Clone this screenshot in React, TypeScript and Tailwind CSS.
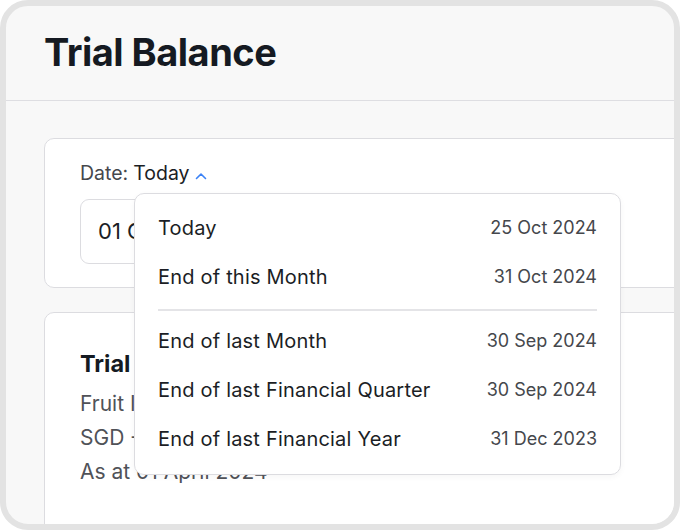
import React from "react";

const items = [
  { label: "Today", date: "25 Oct 2024" },
  { label: "End of this Month", date: "31 Oct 2024" },
];
const items2 = [
  { label: "End of last Month", date: "30 Sep 2024" },
  { label: "End of last Financial Quarter", date: "30 Sep 2024" },
  { label: "End of last Financial Year", date: "31 Dec 2023" },
];

function Row({ label, date }: { label: string; date: string }) {
  return (
    <div className="h-[49px] flex items-center justify-between">
      <span className="text-[20px] tracking-[0.2px] text-[#1b1e25]">{label}</span>
      <span className="text-[18px] text-[#45474c]">{date}</span>
    </div>
  );
}

export default function App() {
  return (
    <div className="w-[680px] h-[530px] bg-white" style={{ fontFamily: "Inter, 'Noto Sans', sans-serif" }}>
      <div className="w-full h-full rounded-[28px] border-[6px] border-[#e3e3e3] bg-[#f8f8f8] overflow-hidden flex flex-col">
        <header className="h-[95px] shrink-0 border-b border-[#dedee2] pl-[38px] flex items-center">
          <h1 className="text-[38px] font-bold text-[#151a22] tracking-[-0.5px] -mt-[2px]">Trial Balance</h1>
        </header>
        <div className="relative flex-1 pl-[38px] pt-[37px] flex flex-col gap-[24px]">
          <div className="w-[700px] h-[150px] shrink-0 rounded-[10px] border border-[#dcdce0] bg-white pl-[35px] pt-[23px]">
            <div className="flex items-center h-[24px] text-[19.5px]">
              <span className="text-[#45474c]">Date:</span>
              <span className="ml-[5px] text-[#1b1e25]">Today</span>
              <svg className="ml-[5px] mt-[3px]" width="12" height="8" viewBox="0 0 12 8" fill="none">
                <path d="M1.5 6.5L6 2L10.5 6.5" stroke="#3b82f6" strokeWidth="1.6" strokeLinecap="round" strokeLinejoin="round" />
              </svg>
            </div>
            <div className="mt-[13px] w-[260px] h-[65px] rounded-[9px] border border-[#dcdce0] flex items-center pl-[17px] text-[22px] text-[#1b1e25]">
              01 Oct 2024
            </div>
          </div>
          <div className="w-[700px] h-[300px] shrink-0 rounded-[10px] border border-[#dcdce0] bg-white pl-[35px] pt-[36px]">
            <div className="text-[23.5px] font-bold text-[#151a22] leading-[30px]">Trial Balance</div>
            <div className="mt-[8px] text-[21px] text-[#505258] leading-[34px]">
              <div>Fruit Industries Pte. Ltd.</div>
              <div>SGD - Singapore Dollar</div>
              <div>As at 01 April 2024</div>
            </div>
          </div>
          <div className="absolute left-[128px] top-[92px] w-[487px] h-[282px] rounded-[10px] border border-[#dcdce0] bg-white shadow-[0_2px_6px_rgba(0,0,0,0.04)] px-[23px] pt-[9px]">
            {items.map((i) => (
              <Row key={i.label} {...i} />
            ))}
            <div className="mt-[8px] mb-[5px] h-[2px] bg-[#e4e4e7]" />
            {items2.map((i) => (
              <Row key={i.label} {...i} />
            ))}
          </div>
        </div>
      </div>
    </div>
  );
}
